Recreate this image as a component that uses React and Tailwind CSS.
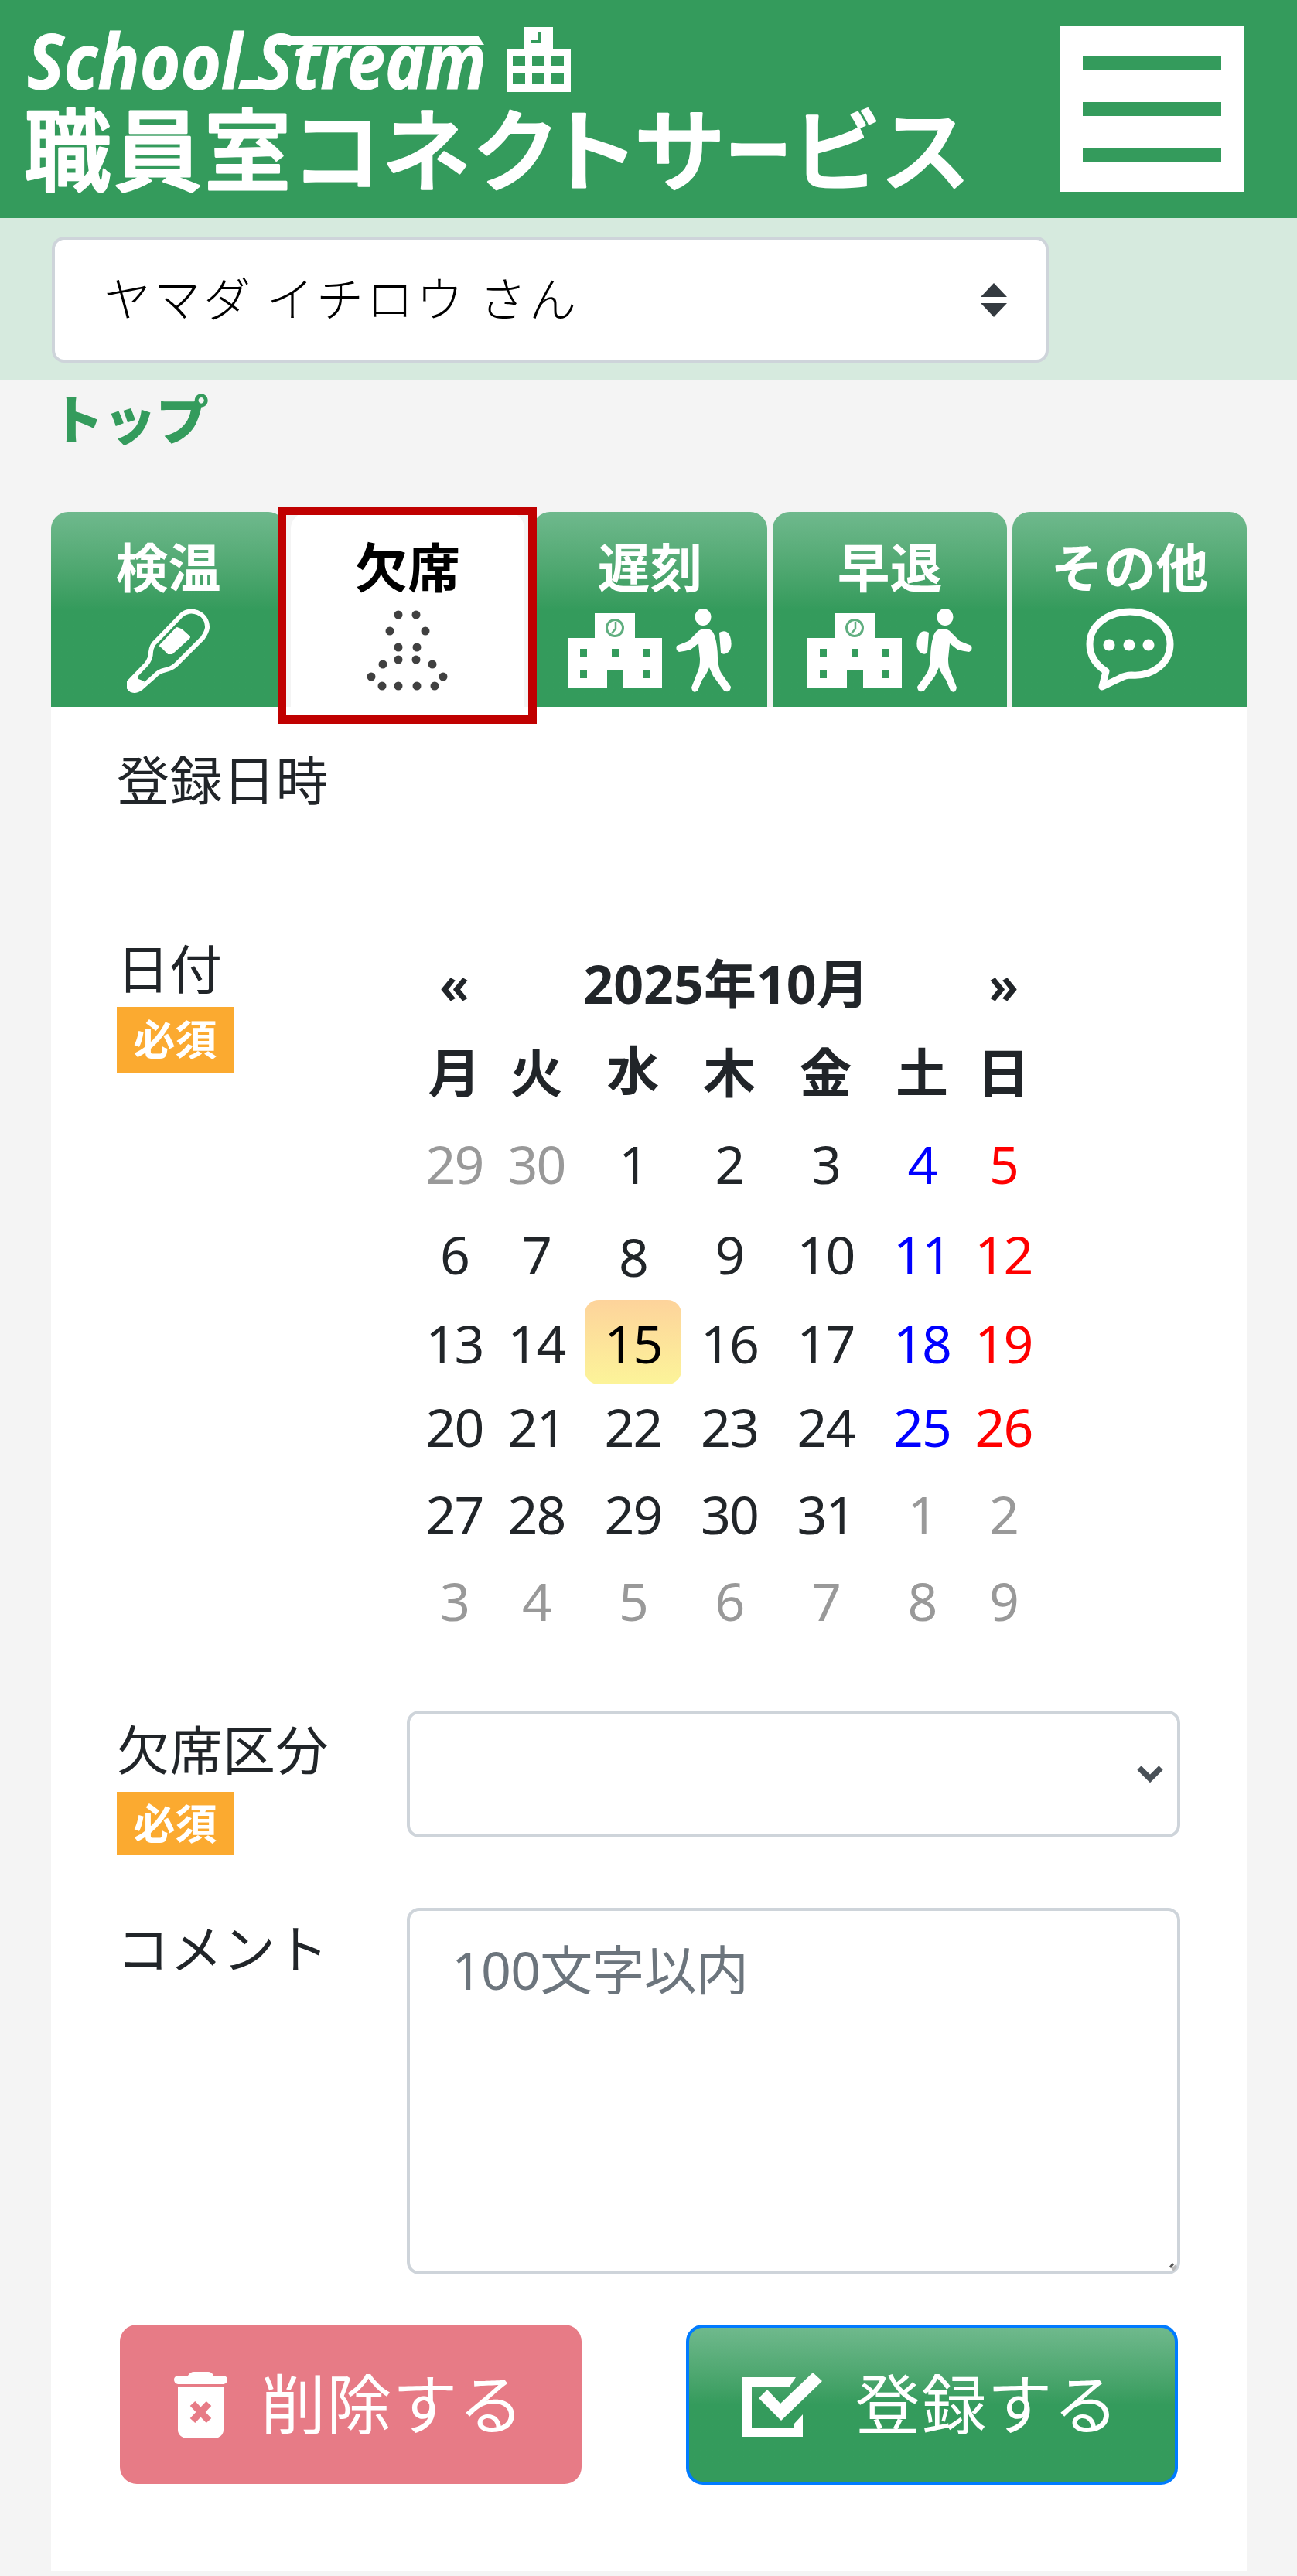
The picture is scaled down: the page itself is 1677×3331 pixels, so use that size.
import { useState } from "react";
import clsx from "clsx";

const weekdays = ["月", "火", "水", "木", "金", "土", "日"];

// out = day of the previous / next month
const weeks = [
  { height: "h-[118px] pb-[4px]", days: [{ d: 29, out: true }, { d: 30, out: true }, { d: 1 }, { d: 2 }, { d: 3 }, { d: 4 }, { d: 5 }] },
  { height: "h-[115px] pb-[4px]", days: [{ d: 6 }, { d: 7 }, { d: 8 }, { d: 9 }, { d: 10 }, { d: 11 }, { d: 12 }] },
  { height: "h-[109px]", days: [{ d: 13 }, { d: 14 }, { d: 15 }, { d: 16 }, { d: 17 }, { d: 18 }, { d: 19 }] },
  { height: "h-[113px] pb-[4px]", days: [{ d: 20 }, { d: 21 }, { d: 22 }, { d: 23 }, { d: 24 }, { d: 25 }, { d: 26 }] },
  { height: "h-[113px] pb-[4px]", days: [{ d: 27 }, { d: 28 }, { d: 29 }, { d: 30 }, { d: 31 }, { d: 1, out: true }, { d: 2, out: true }] },
  { height: "h-[112px] pb-[4px]", days: [{ d: 3, out: true }, { d: 4, out: true }, { d: 5, out: true }, { d: 6, out: true }, { d: 7, out: true }, { d: 8, out: true }, { d: 9, out: true }] },
];

// Service name, one entry per character: left edge and advance
const serviceName = [
  { ch: "職", x: 31, w: 113 },
  { ch: "員", x: 147, w: 114 },
  { ch: "室", x: 264, w: 112 },
  { ch: "コ", x: 376, w: 118 },
  { ch: "ネ", x: 494, w: 115 },
  { ch: "ク", x: 610, w: 114 },
  { ch: "ト", x: 700, w: 128 },
  { ch: "サ", x: 820, w: 118 },
  { ch: "ー", x: 938, w: 85 },
  { ch: "ビ", x: 1023, w: 117 },
  { ch: "ス", x: 1138, w: 117 },
];

function Logo() {
  return (
    <svg width="1260" height="282" viewBox="0 0 1260 282" fill="#fff">
      <g fontFamily="'Noto Sans', 'Open Sans', sans-serif" fontSize="98" fontStyle="italic" fontWeight="700" stroke="#fff" strokeWidth="1">
        <text x="35" y="115" textLength="278" lengthAdjust="spacingAndGlyphs">School</text>
        <text x="332" y="115" textLength="297" lengthAdjust="spacingAndGlyphs">Stream</text>
      </g>
      <path d="M360 46H618L626 58H360Z" />
      <path d="M311 104H350V115H308Z" />

      {/* school building */}
      <path
        fillRule="evenodd"
        d="M677 35h38v28h23v56h-83V63h22zM663 72v13h16V72zM688 72v13h16V72zM713 72v13h16V72zM663 95v14h16V95zM688 95v14h16V95zM713 95v14h16V95z"
      />
      <path d="M697 42v12h-10" fill="none" stroke="#349b5c" strokeWidth="4" />

      <g
        fontFamily="'Liberation Sans', 'Noto Sans CJK JP', sans-serif"
        fontSize="116"
        fontWeight="500"
        stroke="#fff"
        strokeWidth="3"
        strokeLinejoin="round"
      >
        {serviceName.map((c) => (
          <text key={c.ch} x={c.x} y="238" textLength={c.w} lengthAdjust="spacingAndGlyphs">{c.ch}</text>
        ))}
      </g>
    </svg>
  );
}

function ThermometerIcon() {
  return (
    <svg width="109" height="110" viewBox="0 0 109 110" fill="none">
      <path
        d="M71 10C83 -2 106 7 105 26Q104 32 99 39L64 74Q58 79 50 80.500Q42 82 36 89L20 103Q9 111 4 103V96L26 73Q32 66 32 57Q33 48 39 43Z"
        stroke="#fff"
        strokeWidth="6"
      />
      <path d="M66 27L71 29L81 38L59 58H55L47 50L45 49Z" fill="#fff" stroke="#fff" strokeWidth="4" strokeLinejoin="round" />
      <path d="M2 95L15 83L16 92L24 95L15 108Q5 112 1 104Z" fill="#fff" />
    </svg>
  );
}

const dots = [
  [41, 6], [64, 6], [30, 27], [76, 27], [41, 48], [65, 48], [41, 64], [64, 64],
  [21, 70], [85, 70], [6, 86], [99, 86], [20, 98], [41, 98], [65, 98], [88, 98],
];

function AbsentIcon() {
  return (
    <svg width="106" height="105" viewBox="0 0 106 105" fill="#404040">
      {dots.map(([x, y]) => (
        <circle key={`${x}-${y}`} cx={x} cy={y} r="5.5" />
      ))}
    </svg>
  );
}

function BuildingIcon() {
  return (
    <svg width="122" height="97" viewBox="0 0 122 97">
      <path
        fill="#fff"
        fillRule="evenodd"
        d="M35 0h52v32h35v65H72V73H51v24H0V32h35zM16 46v11h9V46zM57 46v11h9V46zM97 46v11h9V46zM16 73v11h9V73zM97 73v11h9V73z"
      />
      <circle cx="61" cy="19" r="10.500" fill="none" stroke="#5fae7f" strokeWidth="3" />
      <path d="M62 11V20L57 26" fill="none" stroke="#5fae7f" strokeWidth="2.500" />
    </svg>
  );
}

function StudentIcon({ className }) {
  return (
    <svg width="73" height="109" viewBox="0 0 73 109" fill="#fff" className={className}>
      <ellipse cx="35" cy="11" rx="10.500" ry="11" />
      <path d="M39 26Q47 26 50 35Q54 48 54 64Q55 78 59 84L71 101Q70 110 62 106L48 87L43 76Q39 86 34 92L28 106Q22 111 20 102L29 79Q31 74 31 65Q30 55 29 45L19 53Q12 55 4 56Q-1 54 1 48L16 42L27 31Q31 26 39 26Z" />
      <path d="M56 31Q66 26 70 36Q74 49 68 56Q62 61 58 57Z" />
    </svg>
  );
}

function ChatIcon() {
  return (
    <svg width="114" height="110" viewBox="0 0 114 110">
      <path
        d="M21 102L26 82C12 73 5 61 5 47C5 23 28 5 57 5C86 5 109 23 109 47C109 71 87 89 59 87Q51 87 44 91Z"
        fill="none"
        stroke="#fff"
        strokeWidth="9"
        strokeLinejoin="round"
      />
      <g fill="#fff">
        <circle cx="30" cy="48" r="7.500" />
        <circle cx="56" cy="48" r="7.500" />
        <circle cx="81" cy="48" r="7.500" />
      </g>
    </svg>
  );
}

function TrashIcon() {
  return (
    <svg width="69" height="85" viewBox="0 0 69 85">
      <g fill="#fff">
        <path d="M5 5H18Q21 0 26 0H44Q49 0 51 5H64Q69 6 69 10Q69 15 64 16H5Q0 15 0 10Q0 6 5 5Z" />
        <path d="M5 20H64V75Q64 82 57 85H12Q5 82 5 75Z" />
      </g>
      <path d="M24 41L45 63M45 41L24 63" stroke="#e77b86" strokeWidth="9" />
    </svg>
  );
}

function CheckIcon() {
  return (
    <svg width="104" height="84" viewBox="0 0 104 84" fill="#fff">
      <path d="M69 6H0V83H78V54L67 66V72H12V18H61Z" />
      <path d="M32 22L49 40L91 0L103 11L50 62L21 33Z" />
    </svg>
  );
}

const tabs = [
  { label: "検温", icon: <ThermometerIcon /> },
  { label: "欠席", icon: <AbsentIcon />, active: true },
  { label: "遅刻", icon: <><BuildingIcon /><StudentIcon /></> },
  { label: "早退", icon: <><BuildingIcon /><StudentIcon className="-scale-x-100" /></> },
  { label: "その他", icon: <ChatIcon /> },
];

function RequiredBadge({ className }) {
  return (
    <span className={clsx("flex w-[151px] items-center justify-center bg-[#fbaa30] text-[54px] leading-none font-bold text-white", className)}>
      必須
    </span>
  );
}

function Calendar({ selected, onSelect }) {
  return (
    <div className="w-[797px] pt-[6px]">
      <div className="grid h-[118px] grid-cols-[87px_125px_374px_124px_87px] items-center pt-[2px] text-center text-[68px] leading-none font-bold">
        <button className="font-semibold">«</button>
        <span />
        <span className="-ml-2 whitespace-nowrap">2025年10月</span>
        <span />
        <button className="font-semibold">»</button>
      </div>
      <div className="grid h-[118px] grid-cols-[87px_125px_125px_124px_125px_124px_87px] items-center pb-[4px] text-center text-[68px] leading-none font-bold">
        {weekdays.map((w) => (
          <span key={w} className={w === "水" ? "-mt-1.5" : undefined}>{w}</span>
        ))}
      </div>
      {weeks.map((week, row) => (
        <div
          key={row}
          className={clsx("grid grid-cols-[87px_125px_125px_124px_125px_124px_87px] text-[68px] leading-none tracking-[-2px]", week.height)}
        >
          {week.days.map(({ d, out }, col) => (
            <button
              key={col}
              onClick={() => !out && onSelect(d)}
              className={clsx(
                "flex items-center justify-center",
                out && "text-[#999]",
                !out && col === 5 && "text-[#00f]",
                !out && col === 6 && "text-[#f00]",
                !out && d === 8 && "pt-1.5",
                row === 2 && "pt-0.5",
                !out && d === selected && "rounded-[18px] bg-linear-to-b from-[#fdd39b] to-[#fcf499] text-black"
              )}
            >
              {d}
            </button>
          ))}
        </div>
      ))}
    </div>
  );
}

export default function App() {
  const [day, setDay] = useState(15);
  const [comment, setComment] = useState("");

  return (
    <div className="h-[3331px] w-[1677px] overflow-hidden bg-[#f4f4f4] font-['Noto_Sans','Noto_Sans_CJK_JP',sans-serif] text-[#212529]">
      <header className="flex h-[282px] items-start justify-between bg-[#349b5c] pr-[69px]">
        <Logo />
        <button className="mt-[34px] flex h-[214px] w-[237px] flex-col items-center justify-center gap-[41px] bg-white">
          <span className="h-[18px] w-[179px] bg-[#349b5c]" />
          <span className="h-[18px] w-[179px] bg-[#349b5c]" />
          <span className="h-[18px] w-[179px] bg-[#349b5c]" />
        </button>
      </header>

      {/* Student selector */}
      <div className="h-[210px] bg-[#d6eade] pt-[24px] pl-[67px]">
        <button className="flex h-[163px] w-[1289px] items-center justify-between rounded-[16px] border-4 border-[#ced4da] bg-white pr-[50px] pl-[63px]">
          <span className="pb-[8px] font-['Noto_Sans_CJK_JP',sans-serif] text-[61px] leading-none font-light tracking-[3.5px] text-black">
            ヤマダ イチロウ さん
          </span>
          <svg width="34" height="44" viewBox="0 0 34 44" fill="#343a40">
            <path d="M17 0L34 18H0ZM0 26H34L17 44Z" />
          </svg>
        </button>
      </div>

      <div className="h-[170px] pt-[15px] pl-[66px]">
        <a className="text-[68px] leading-[72px] font-extrabold text-[#349b5c]">トップ</a>
      </div>

      {/* Tabs */}
      <nav className="flex h-[252px] gap-[7px] pl-[66px]">
        {tabs.map((tab) => (
          <button
            key={tab.label}
            className={clsx(
              "relative flex flex-col items-center rounded-t-[22px] pt-[36px]",
              tab.active
                ? "mr-[4px] w-[302px] bg-white text-black"
                : "w-[303px] bg-linear-to-b from-[#6fb98d] to-[#349b5c] to-50% text-white"
            )}
          >
            <span className="text-[68px] leading-[72px] font-bold">{tab.label}</span>
            <span className="mt-[16px] flex h-[110px] items-center gap-[18px]">{tab.icon}</span>
            {tab.active && (
              <span className="absolute -top-[7px] -left-[17px] z-10 h-[281px] w-[335px] border-[11px] border-[#c00000]" />
            )}
          </button>
        ))}
      </nav>

      <main className="ml-[66px] h-[2410px] w-[1546px] bg-white pt-[55px] pl-[85px]">
        <div className="h-[237px] pt-[4px] text-[68px] leading-[72px] tracking-[0.5px]">登録日時</div>

        <div className="flex h-[1006px]">
          <div className="w-[393px] pt-[11px]">
            <div className="text-[68px] leading-[72px]">日付</div>
            <RequiredBadge className="mt-[13px] h-[86px] pb-[3px]" />
          </div>
          <Calendar selected={day} onSelect={setDay} />
        </div>

        <div className="flex h-[255px]">
          <div className="w-[375px] pt-[15px]">
            <div className="text-[68px] leading-[72px] tracking-[0.5px]">欠席区分</div>
            <RequiredBadge className="mt-[18px] h-[82px]" />
          </div>
          <button className="flex h-[164px] w-[1000px] items-center justify-end rounded-[16px] border-4 border-[#ced4da] pr-[17px]">
            <svg width="36" height="26" viewBox="0 0 36 26" fill="none">
              <path d="M4 5L18 19L32 5" stroke="#495057" strokeWidth="7.500" />
            </svg>
          </button>
        </div>

        <div className="flex h-[539px]">
          <div className="w-[375px] pt-[17px] text-[68px] leading-[72px] tracking-[0.5px]">コメント</div>
          <div className="relative h-[474px] w-[1000px]">
            <textarea
              value={comment}
              onChange={(e) => setComment(e.target.value)}
              placeholder="100文字以内"
              className="block h-full w-full resize-none rounded-[16px] border-4 border-[#ced4da] px-[54px] py-[36px] text-[68px] leading-[80px] tracking-[-0.8px] placeholder:text-[#6c757d]"
            />
            <svg className="absolute right-[4px] bottom-[4px]" width="10" height="11" viewBox="0 0 10 11">
              <path d="M1 6L5 1" stroke="#555" strokeWidth="3" />
              <path d="M4 9L9 4" stroke="#bbb" strokeWidth="4" />
            </svg>
          </div>
        </div>

        <div className="flex gap-[135px] pl-[4px] text-[84px] leading-none tracking-[1.3px] text-white">
          <button className="flex h-[206px] w-[597px] items-center rounded-[22px] bg-[#e77b86] pl-[70px]">
            <TrashIcon />
            <span className="ml-[43px] pb-px">削除する</span>
          </button>
          <button className="flex h-[207px] w-[636px] items-center rounded-[22px] border-4 border-[#007bff] bg-linear-to-b from-[#6fb98d] to-[#349b5c] to-50% pl-[69px]">
            <CheckIcon />
            <span className="ml-[42px] pb-px">登録する</span>
          </button>
        </div>
      </main>
    </div>
  );
}
